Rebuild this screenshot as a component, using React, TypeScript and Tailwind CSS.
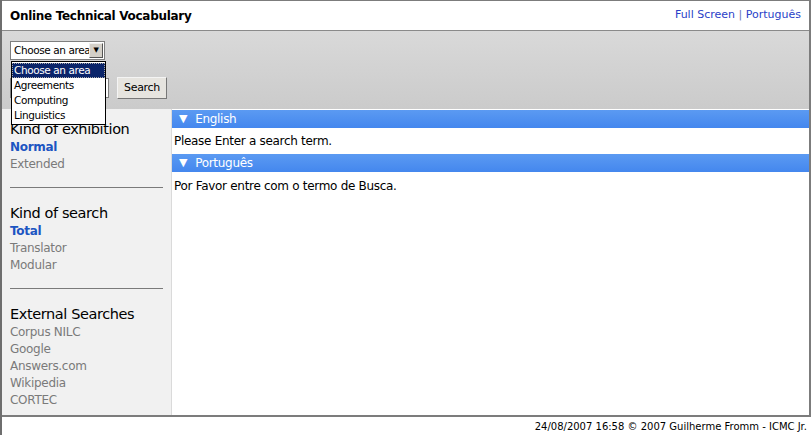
import React from "react";

const exhibition = [
  { label: "Normal", active: true },
  { label: "Extended", active: false },
];

const searchKinds = [
  { label: "Total", active: true },
  { label: "Translator", active: false },
  { label: "Modular", active: false },
];

const external = ["Corpus NILC", "Google", "Answers.com", "Wikipedia", "CORTEC"];

const areas = ["Choose an area", "Agreements", "Computing", "Linguistics"];

function SideGroup({
  title,
  items,
}: {
  title: string;
  items: { label: string; active: boolean }[];
}) {
  return (
    <div>
      <h2 className="text-[14.5px] leading-[19px] text-black tracking-[-0.4px]">{title}</h2>
      <ul>
        {items.map((it) => (
          <li
            key={it.label}
            className={
              it.active
                ? "leading-[17px] font-bold text-[#1c55c2]"
                : "leading-[17px] text-[#7a7a7a]"
            }
          >
            {it.label}
          </li>
        ))}
      </ul>
    </div>
  );
}

function Bar({ label }: { label: string }) {
  return (
    <div className="h-[18px] flex items-center bg-gradient-to-b from-[#5b9af2] to-[#4487ee] text-white">
      <span className="ml-[7px] text-[11px]">▼</span>
      <span className="ml-[8px]">{label}</span>
    </div>
  );
}

export default function App() {
  return (
    <div className="w-[811px] h-[435px] bg-white font-['DejaVu_Sans',sans-serif] text-[12px] tracking-[-0.3px] text-black border-l-2 border-[#6e6e6e] flex flex-col">
      <div className="h-[417px] flex flex-col border-t border-r-2 border-b-2 border-[#7c7c7c]">
        {/* header */}
        <header className="h-[30px] shrink-0 flex items-center justify-between pl-[8px] pr-[8px] border-b border-[#8a8a8a]">
          <span className="font-bold">Online Technical Vocabulary</span>
          <span className="text-[11px] tracking-normal text-[#2a3fc8]">
            Full Screen <span className="text-[#6a74b8]">|</span> Português
          </span>
        </header>

        {/* toolbar */}
        <div className="h-[78px] shrink-0 relative bg-gradient-to-b from-[#d9d9d9] to-[#cbcbcb] pl-[8px] pt-[10px]">
          <div className="w-[95px] h-[19px] flex items-center bg-white border border-[#7f7f7f] text-[10.5px] tracking-[-0.4px]">
            <span className="flex-1 pl-[3px] whitespace-nowrap overflow-hidden">Choose an area</span>
            <span className="w-[14px] h-[15px] mr-[1px] shrink-0 flex items-center justify-center bg-[#d4d0c8] border border-[#eee] border-r-[#555] border-b-[#555] text-[7px]">
              ▼
            </span>
          </div>
          <div className="mt-[17px] flex items-center gap-[8px]">
            <div className="w-[99px] h-[20px] bg-white border border-[#7f7f7f]" />
            <button className="h-[22px] px-[6px] text-[11px] bg-[#e6e4df] border border-[#f4f4f4] border-r-[#777] border-b-[#777]">
              Search
            </button>
          </div>

          {/* open dropdown list */}
          <ul className="absolute left-[9px] top-[30px] w-[95px] bg-white border border-black text-[10.5px] tracking-[-0.4px] leading-[15px] py-[1px]">
            {areas.map((a, i) => (
              <li
                key={a}
                className={
                  i === 0
                    ? "px-[2px] bg-[#0a246a] text-white outline outline-1 outline-dotted outline-[#aaa] -outline-offset-1"
                    : "px-[2px]"
                }
              >
                {a}
              </li>
            ))}
          </ul>
        </div>

        {/* body */}
        <div className="flex-1 flex min-h-0">
          <aside className="w-[170px] shrink-0 bg-[#f1f1f1] border-r border-[#dadada] pl-[8px] pr-[8px] pt-[11px]">
            <SideGroup title="Kind of exhibition" items={exhibition} />
            <hr className="mt-[14px] mb-[16px] border-t border-[#7a7a7a]" />
            <SideGroup title="Kind of search" items={searchKinds} />
            <hr className="mt-[14px] mb-[16px] border-t border-[#7a7a7a]" />
            <div>
              <h2 className="text-[14.5px] leading-[19px] tracking-[-0.4px]">External Searches</h2>
              <ul>
                {external.map((e) => (
                  <li key={e} className="leading-[17px] text-[#7a7a7a]">
                    {e}
                  </li>
                ))}
              </ul>
            </div>
          </aside>

          <main className="flex-1 pt-[1px]">
            <Bar label="English" />
            <p className="h-[26px] flex items-center pl-[2px]">Please Enter a search term.</p>
            <Bar label="Português" />
            <p className="h-[28px] flex items-center pl-[2px]">Por Favor entre com o termo de Busca.</p>
          </main>
        </div>
      </div>

      {/* footer */}
      <footer className="flex-1 flex items-center justify-end pr-[4px] text-[10px] tracking-normal">
        24/08/2007 16:58 © 2007 Guilherme Fromm - ICMC Jr.
      </footer>
    </div>
  );
}
